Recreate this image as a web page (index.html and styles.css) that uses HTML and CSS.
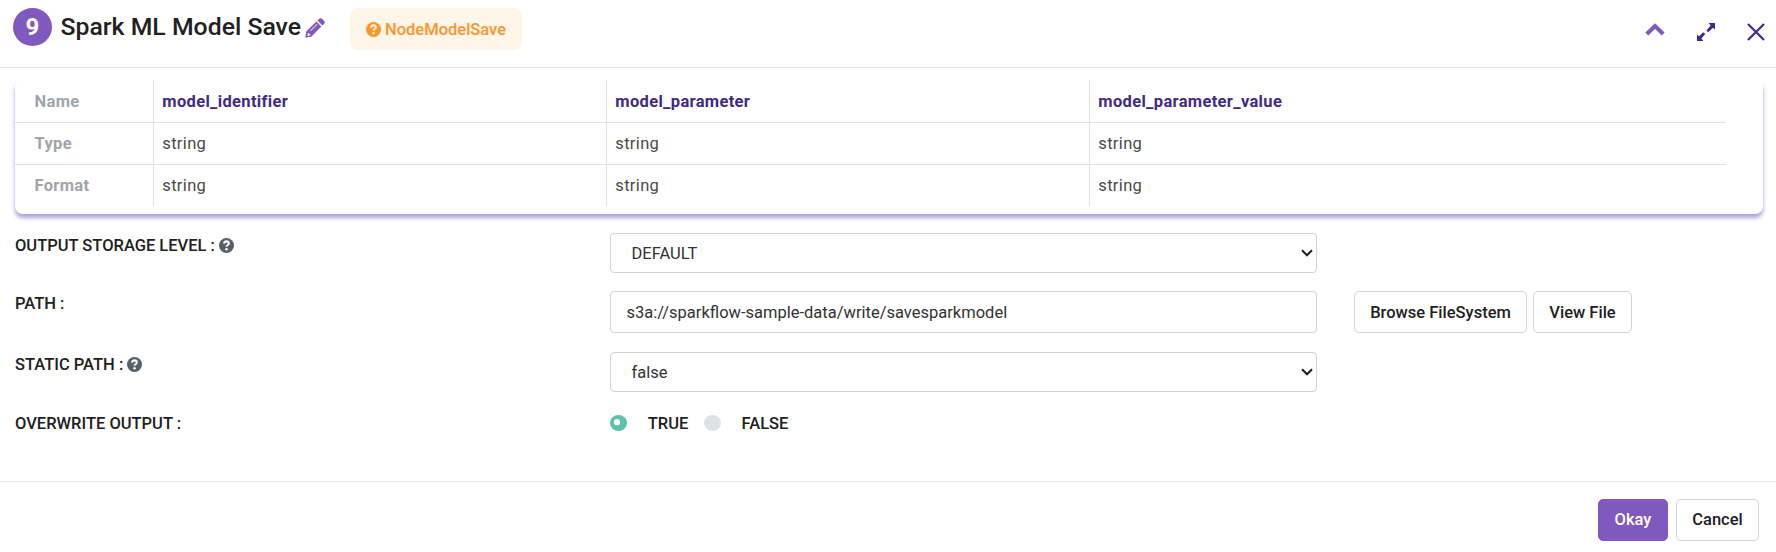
FILE: index.html
```html
<!DOCTYPE html>
<html lang="en">
<head>
<meta charset="utf-8">
<title>Spark ML Model Save</title>
<link rel="stylesheet" href="styles.css">
</head>
<body>
<div class="dialog">
  <header class="header">
    <span class="step">9</span>
    <h1 class="title">Spark ML Model Save</h1>
    <svg class="pencil" viewBox="0 0 20 20"><path fill="#8058be" fill-rule="evenodd" d="M0.3 19.8 1.2 13.6 11.4 3.6 16.4 8.6 6.2 18.8ZM12.5 2.6 14.6.6Q15.8-.4 17 .8L19.2 3Q20.4 4.2 19.4 5.4L17.4 7.5ZM3 15 2.3 17.4 2.9 18 5.2 17.3V15.9H4V15ZM5.3 12.6 5.8 13.1 12.4 6.6 11.9 6.1Z"/></svg>
    <span class="badge"><svg class="help" viewBox="0 0 16 16"><circle cx="8" cy="8" r="8" fill="#ff9429"/><path d="M5.4 6C5.6 4.4 6.6 3.6 8 3.6 9.5 3.6 10.5 4.5 10.5 5.8 10.5 7.5 8 7.5 8 9.4" fill="none" stroke="#fff5e9" stroke-width="2.2"/><circle cx="8" cy="11.9" r="1.35" fill="#fff5e9"/></svg>NodeModelSave</span>
    <div class="tools">
      <svg class="tool-up" viewBox="0 0 20 13"><path d="M1.8 11 10 3 18.2 11" fill="none" stroke="#8058be" stroke-width="4"/></svg>
      <svg class="tool-expand" viewBox="0 0 18 18"><path d="M11.5 0H18V6.5L16 4.8 11.2 9.2 9.4 7.4 13.6 2.5ZM6.5 18H0V11.5L2 13.2 6.3 9.2 8.2 11 4.4 15.5Z" fill="#432a87"/></svg>
      <svg class="tool-close" viewBox="0 0 18 18"><path d="M1 1 17 17M17 1 1 17" fill="none" stroke="#432a87" stroke-width="2.2"/></svg>
    </div>
  </header>
  <main class="body">
    <section class="schema-clip">
      <div class="schema-card">
        <table class="schema">
          <colgroup><col class="c1"><col class="c2"><col class="c3"><col class="c4"></colgroup>
          <tr><th>Name</th><td class="name">model_identifier</td><td class="name">model_parameter</td><td class="name">model_parameter_value</td></tr>
          <tr><th>Type</th><td>string</td><td>string</td><td>string</td></tr>
          <tr><th>Format</th><td>string</td><td>string</td><td>string</td></tr>
        </table>
      </div>
    </section>
    <div class="form">
      <div class="row row-storage">
        <div class="label">OUTPUT STORAGE LEVEL : <svg class="help" viewBox="0 0 16 16"><circle cx="8" cy="8" r="8" fill="#575f6b"/><path d="M5.4 6C5.6 4.4 6.6 3.6 8 3.6 9.5 3.6 10.5 4.5 10.5 5.8 10.5 7.5 8 7.5 8 9.4" fill="none" stroke="#fff" stroke-width="2.2"/><circle cx="8" cy="11.9" r="1.35" fill="#fff"/></svg></div>
        <div class="field select"><span>DEFAULT</span><svg class="caret" viewBox="0 0 12 8"><path d="M1 1.2 6 6.2 11 1.2" fill="none" stroke="#212121" stroke-width="2.1"/></svg></div>
      </div>
      <div class="row row-path">
        <div class="label">PATH :</div>
        <div class="field input"><span>s3a://sparkflow-sample-data/write/savesparkmodel</span></div>
        <div class="actions"><button class="btn browse">Browse FileSystem</button><button class="btn view">View File</button></div>
      </div>
      <div class="row row-static">
        <div class="label">STATIC PATH : <svg class="help" viewBox="0 0 16 16"><circle cx="8" cy="8" r="8" fill="#575f6b"/><path d="M5.4 6C5.6 4.4 6.6 3.6 8 3.6 9.5 3.6 10.5 4.5 10.5 5.8 10.5 7.5 8 7.5 8 9.4" fill="none" stroke="#fff" stroke-width="2.2"/><circle cx="8" cy="11.9" r="1.35" fill="#fff"/></svg></div>
        <div class="field select"><span>false</span><svg class="caret" viewBox="0 0 12 8"><path d="M1 1.2 6 6.2 11 1.2" fill="none" stroke="#212121" stroke-width="2.1"/></svg></div>
      </div>
      <div class="row">
        <div class="label">OVERWRITE OUTPUT :</div>
        <div class="radios">
          <svg class="radio" viewBox="0 0 17 16"><ellipse cx="8.5" cy="8" rx="8.5" ry="8" fill="#5dc2ac"/><circle cx="7" cy="7.2" r="3.1" fill="#fff"/></svg><span class="option first">TRUE</span>
          <svg class="radio" viewBox="0 0 17 16"><ellipse cx="8.5" cy="8" rx="8.5" ry="8" fill="#dee1e7"/></svg><span class="option">FALSE</span>
        </div>
      </div>
    </div>
  </main>
  <footer class="footer"><button class="btn primary">Okay</button><button class="btn cancel">Cancel</button></footer>
</div>
</body>
</html>
```
FILE: styles.css
```css
* { box-sizing: border-box; }
body { margin: 0; background: #fff; color: #212121; font: 400 16.5px/24px Roboto, sans-serif; }
svg { display: block; flex: none; }
.dialog { width: 1776px; height: 552px; display: flex; flex-direction: column; overflow: hidden; }
.header { height: 68px; flex: none; display: flex; align-items: flex-start; padding: 8px 11px 0 13px; border-bottom: 1px solid #e6e8ea; }
.step { width: 39px; height: 38px; border-radius: 50%; background: #8058be; color: #fff; font-weight: 700; font-size: 24px; line-height: 38px; text-align: center; }
.title { margin: 3px 0 0 8.5px; width: 244.5px; font-size: 24.8px; line-height: 32px; font-weight: 500; white-space: nowrap; }
.pencil { width: 20px; height: 20px; margin-top: 10px; }
.badge { margin-left: 25px; width: 172px; height: 42px; border-radius: 8px; background: #fff5e9; color: #ff9429; font-weight: 500; display: flex; align-items: center; padding: 1px 0 0 16px; }
.badge .help { width: 15px; height: 15px; margin: -1px 4px 0 0; }
.tools { margin-left: auto; display: flex; align-items: center; padding-top: 14px; }
.tool-up { width: 20px; height: 13px; margin-top: -5px; }
.tool-expand { width: 18px; height: 18px; margin-left: 32px; }
.tool-close { width: 18px; height: 18px; margin: 1px 0 0 32px; }
.body { flex: 1; }
.schema-clip { padding: 0 13px 12px 15px; height: 158px; overflow: hidden; clip-path: inset(12px 0 0 0); }
.schema-card { height: 146px; padding-top: 12px; position: relative; }
.schema-card::before { content: ""; position: absolute; z-index: -1; inset: 11px 0 0 0; border-radius: 8px; background: #fff; box-shadow: 0 4px 4px #aca3da; }
.schema { width: 1711px; table-layout: fixed; border-collapse: collapse; letter-spacing: .33px; }
.c1 { width: 138px; } .c2 { width: 453px; } .c3 { width: 483px; }
.schema th, .schema td { height: 42px; padding: 2px 8px 0 8.8px; text-align: left; border-right: 1px solid #dee2e6; border-bottom: 1px solid #dee2e6; color: #4a4a4a; }
.schema th { padding-left: 19.5px; font-weight: 700; color: #a0a5ac; }
.schema td:last-child { border-right: 0; }
.schema tr:last-child > * { border-bottom: 0; }
.schema td.name { color: #432a87; font-weight: 700; }
.form { padding: 7px 15px 0; }
.row { display: flex; align-items: flex-start; }
.row-storage { height: 58px; } .row-path { height: 61px; } .row-static { height: 59px; }
.label { width: 595px; flex: none; display: flex; align-items: center; font-weight: 500; padding-top: 1px; }
.label .help { width: 15px; height: 15px; margin: -2px 0 0 4px; }
.field { width: 707px; flex: none; border: 1px solid #ced4da; border-radius: 4px; display: flex; align-items: center; color: #333; }
.field span { padding-top: 1px; }
.select { height: 40px; padding: 0 3px 0 20.5px; justify-content: space-between; }
.input { height: 42px; padding-left: 15.5px; }
.caret { width: 12px; height: 8px; }
.actions { margin-left: 37px; display: flex; gap: 6px; }
.btn { height: 42px; padding: 0; border: 1px solid #ced4da; border-radius: 5px; background: #fff; color: #212121; font: 500 16.5px/24px Roboto, sans-serif; white-space: nowrap; }
.browse, .view { padding-top: 1px; }
.browse { width: 173px; } .view { width: 99px; }
.radios { display: flex; align-items: center; font-weight: 500; height: 24px; }
.radio { width: 17px; height: 16px; }
.option { margin-left: 20.8px; padding-top: 1px; }
.first { margin-right: 15.4px; }
.footer { height: 71px; flex: none; border-top: 1px solid #e6e8ea; padding: 17px 17px 0; display: flex; justify-content: flex-end; gap: 8px; }
.primary { width: 70px; background: #8058be; border-color: #8058be; color: #fff; }
.cancel { width: 83px; }
```
